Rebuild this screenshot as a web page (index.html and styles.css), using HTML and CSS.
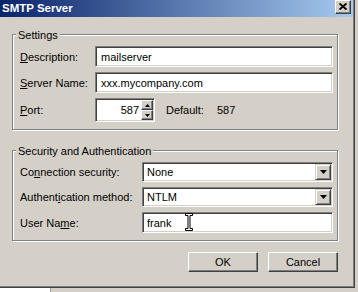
FILE: index.html
```html
<!DOCTYPE html>
<html>
<head>
<meta charset="utf-8">
<link rel="stylesheet" href="styles.css">
</head>
<body>
<div class="screen">
  <div class="window">
    <div class="titlebar">
      <span class="title">SMTP Server</span>
      <span class="close">
        <svg width="8" height="7" viewBox="0 0 8 7"><path d="M0.5 0.5 L7.5 6.5 M7.5 0.5 L0.5 6.5" stroke="#000" stroke-width="1.9" fill="none"/></svg>
      </span>
    </div>
    <div class="client">
      <div class="group">
        <div class="group-title">Settings</div>
        <div class="grid grid-settings">
          <div class="lbl"><u>D</u>escription:</div>
          <div class="field"><span class="val">mailserver</span></div>
          <div class="lbl"><u>S</u>erver Name:</div>
          <div class="field"><span class="val">xxx.mycompany.com</span></div>
          <div class="lbl"><u>P</u>ort:</div>
          <div class="port-row">
            <div class="port">
              <span class="port-val">587</span>
              <div class="spin">
                <div class="spin-btn"><svg width="5" height="3" viewBox="0 0 5 3"><path d="M2.5 0 L5 3 L0 3 Z" fill="#000"/></svg></div>
                <div class="spin-btn"><svg width="5" height="3" viewBox="0 0 5 3"><path d="M0 0 L5 0 L2.5 3 Z" fill="#000"/></svg></div>
              </div>
            </div>
            <span class="default-lbl">Default:</span>
            <span class="default-val">587</span>
          </div>
        </div>
      </div>
      <div class="group group-sec">
        <div class="group-title">Security and Authentication</div>
        <div class="grid grid-sec">
          <div class="lbl">Co<u>n</u>nection security:</div>
          <div class="field select"><span class="val">None</span>
            <span class="drop"><svg width="7" height="4" viewBox="0 0 7 4"><path d="M0 0 L7 0 L3.5 4 Z" fill="#000"/></svg></span>
          </div>
          <div class="lbl">Authent<u>i</u>cation method:</div>
          <div class="field select"><span class="val">NTLM</span>
            <span class="drop"><svg width="7" height="4" viewBox="0 0 7 4"><path d="M0 0 L7 0 L3.5 4 Z" fill="#000"/></svg></span>
          </div>
          <div class="lbl">User Na<u>m</u>e:</div>
          <div class="field user"><span class="val">frank</span>
            <svg class="ibeam" width="8" height="18" viewBox="0 0 8 18"><path d="M0.5 0.5 H7.5 V2.5 H5 V15.5 H7.5 V17.5 H0.5 V15.5 H3 V2.5 H0.5 Z" fill="#fff" stroke="#000" stroke-width="1"/></svg>
          </div>
        </div>
      </div>
      <div class="buttons">
        <div class="btn">OK</div>
        <div class="btn">Cancel</div>
      </div>
    </div>
  </div>
  <div class="below">
    <div class="below-white"></div>
    <div class="below-line"></div>
  </div>
</div>
</body>
</html>
```
FILE: styles.css
```css
html, body {
  margin: 0;
  padding: 0;
}
body {
  width: 358px;
  height: 292px;
  overflow: hidden;
  background: #d4d0c8;
  font-family: "Liberation Sans", Arial, sans-serif;
  font-size: 11px;
  color: #000;
}
.screen {
  display: flex;
  flex-direction: column;
}
.window {
  width: 355px;
  height: 288px;
  box-sizing: border-box;
  border-right: 1px solid #404040;
  border-bottom: 1px solid #404040;
  box-shadow: inset -1px -1px #808080;
  background: #d4d0c8;
  display: flex;
  flex-direction: column;
}
.titlebar {
  height: 17px;
  margin-right: 1px;
  background: linear-gradient(to right, #0a246a, #a6caf0);
  display: flex;
  justify-content: space-between;
  align-items: flex-start;
}
.title {
  color: #fff;
  font-weight: bold;
  font-size: 11.5px;
  line-height: 16px;
  padding-left: 2px;
}
.close {
  width: 16px;
  height: 14px;
  box-sizing: border-box;
  margin-right: 2px;
  background: #d4d0c8;
  border: 1px solid;
  border-color: #fff #404040 #404040 #fff;
  box-shadow: inset -1px -1px #808080;
  display: flex;
  align-items: center;
  justify-content: center;
  padding-bottom: 1px;
}
.client {
  padding: 17px 16px 0 12px;
  display: flex;
  flex-direction: column;
}
.group {
  border: 1px solid #808080;
  box-shadow: inset 1px 1px #fff, 1px 1px #fff;
  display: flex;
  flex-direction: column;
  padding: 0 4px 7px 7px;
}
.group-sec {
  margin-top: 20px;
}
.group-title {
  align-self: flex-start;
  margin: -6px 0 0 -4px;
  padding: 0 2px;
  line-height: 13px;
  background: #d4d0c8;
}
.grid {
  display: grid;
  row-gap: 5px;
  margin-top: 4px;
}
.grid-settings {
  grid-template-columns: 75px 1fr;
  grid-template-rows: 21px 21px 24px;
}
.grid-sec {
  grid-template-columns: 122px 1fr;
  grid-template-rows: 20px 20px 21px;
}
.lbl {
  align-self: center;
  white-space: nowrap;
}
.field {
  position: relative;
  background: #fff;
  border: 1px solid;
  border-color: #808080 #fff #fff #808080;
  box-shadow: inset 1px 1px #404040, inset -1px -1px #d4d0c8;
  display: flex;
  align-items: center;
  padding-left: 5px;
}
.select {
  padding-left: 4px;
  justify-content: space-between;
  padding-right: 1px;
}
.user {
  padding-left: 4px;
}
.val {
  white-space: nowrap;
}
.drop {
  width: 16px;
  height: 16px;
  box-sizing: border-box;
  background: #d4d0c8;
  border: 1px solid;
  border-color: #d4d0c8 #404040 #404040 #d4d0c8;
  box-shadow: inset 1px 1px #fff, inset -1px -1px #808080;
  display: flex;
  align-items: center;
  justify-content: center;
}
.ibeam {
  position: absolute;
  left: 42px;
  top: 0px;
}
.port-row {
  display: flex;
  align-items: center;
}
.port {
  width: 60px;
  height: 24px;
  box-sizing: border-box;
  background: #fff;
  border: 1px solid;
  border-color: #808080 #fff #fff #808080;
  box-shadow: inset 1px 1px #404040, inset -1px -1px #d4d0c8;
  display: flex;
  padding: 1px;
}
.port-val {
  flex: 1;
  text-align: right;
  line-height: 20px;
  padding-right: 2px;
}
.spin {
  width: 12px;
  display: flex;
  flex-direction: column;
}
.spin-btn {
  height: 11px;
  box-sizing: border-box;
  background: #d4d0c8;
  border: 1px solid;
  border-color: #fff #404040 #404040 #fff;
  box-shadow: inset -1px -1px #808080;
  display: flex;
  align-items: center;
  justify-content: center;
}
.spin-btn + .spin-btn {
  height: 10px;
}
.default-lbl {
  margin-left: 11px;
}
.default-val {
  margin-left: 13px;
}
.buttons {
  display: flex;
  justify-content: flex-end;
  gap: 10px;
  margin-top: 11px;
}
.btn {
  width: 70px;
  height: 20px;
  box-sizing: border-box;
  border: 1px solid;
  border-color: #fff #404040 #404040 #fff;
  box-shadow: inset -1px -1px #808080;
  background: #d4d0c8;
  display: flex;
  align-items: center;
  justify-content: center;
}
.below {
  height: 4px;
  display: flex;
}
.below-white {
  width: 50px;
  background: #fff;
}
.below-line {
  width: 1px;
  background: #a0a0a0;
}
```
